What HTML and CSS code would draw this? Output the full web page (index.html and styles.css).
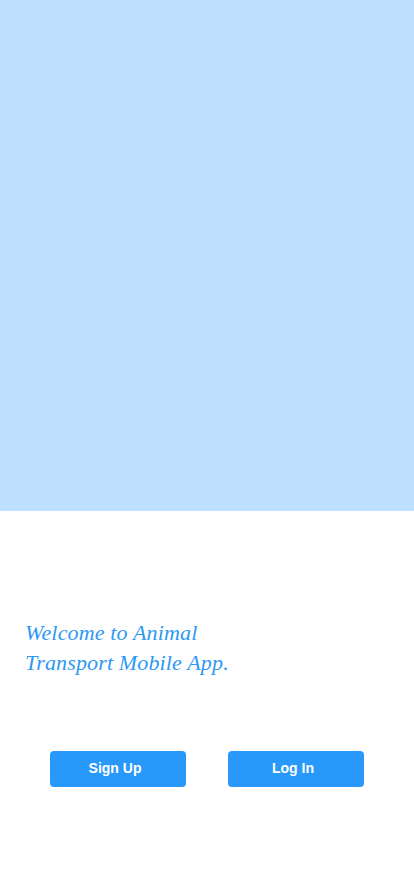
FILE: index.html
```html
<!DOCTYPE html>
<html>
<head>
<meta charset="utf-8">
<link rel="stylesheet" href="styles.css">
</head>
<body>
<div class="screen">
  <div class="hero"></div>
  <div class="content">
    <p class="welcome">Welcome to Animal<br>Transport Mobile App.</p>
    <div class="actions">
      <button class="btn">Sign Up</button>
      <button class="btn">Log In</button>
    </div>
  </div>
</div>
</body>
</html>
```
FILE: styles.css
```css
html, body {
  margin: 0;
  padding: 0;
  background: #ffffff;
}
.screen {
  width: 414px;
  height: 896px;
  display: flex;
  flex-direction: column;
}
.hero {
  height: 511px;
  background: #bfe0fe;
}
.content {
  display: flex;
  flex-direction: column;
  padding: 107px 0 0 25px;
}
.welcome {
  margin: 0;
  font-family: "Liberation Serif", "DejaVu Serif", serif;
  font-style: italic;
  font-size: 22px;
  letter-spacing: 0.15px;
  line-height: 30px;
  color: #2d98f3;
}
.actions {
  display: flex;
  gap: 42px;
  padding: 73px 0 0 25px;
}
.btn {
  width: 136px;
  height: 36px;
  border: none;
  border-radius: 4px;
  background: #2899fb;
  color: #ffffff;
  font-family: "Liberation Sans", Arial, sans-serif;
  font-weight: bold;
  font-size: 14px;
  padding: 0 6px 2px 0;
}
```
